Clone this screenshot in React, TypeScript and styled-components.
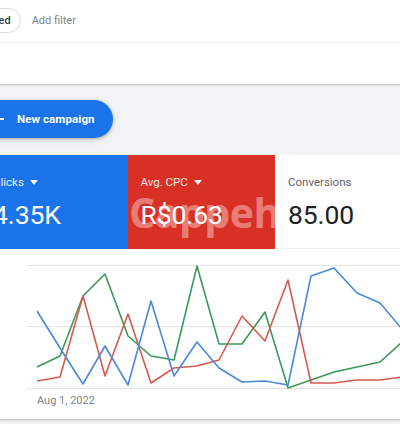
import React from 'react';
import styled, { createGlobalStyle } from 'styled-components';

const GlobalStyle = createGlobalStyle`
  html, body {
    margin: 0;
    padding: 0;
    background: #f1f3f4;
    font-family: Roboto, "Liberation Sans", Arial, sans-serif;
  }
`

const Page = styled.div`
  width: 400px;
  height: 424px;
  overflow: hidden;
  background: #f1f3f4;
  position: relative;
`

const FilterBar = styled.div`
  height: 43px;
  background: #fff;
  border-bottom: 1px solid #ececec;
  display: flex;
  align-items: center;
  gap: 11px;
  box-sizing: border-box;
  padding-bottom: 1px;
`

const Chip = styled.span`
  height: 25px;
  margin-left: -79px;
  padding: 0 9px 0 12px;
  border: 1px solid #dadce0;
  border-radius: 13px;
  display: flex;
  align-items: center;
  font-size: 11px;
  font-weight: 500;
  color: #3c4043;
  white-space: nowrap;
  box-sizing: border-box;
`

const AddFilter = styled.span`
  font-size: 11px;
  color: #80868b;
`

const Blank = styled.div`
  height: 41px;
  background: #fff;
  border-bottom: 1px solid #c6c6c6;
  box-shadow: 0 1px 2px rgba(0, 0, 0, 0.08);
`

const Toolbar = styled.div`
  height: 70px;
  padding-top: 15px;
  box-sizing: border-box;
`

const NewButton = styled.button`
  margin-left: -20px;
  height: 38px;
  padding: 0 18px 0 10px;
  border: none;
  border-radius: 19px;
  background: #1a73e8;
  color: #fff;
  display: flex;
  align-items: center;
  gap: 11px;
  font-family: Roboto, "Liberation Sans", Arial, sans-serif;
  font-size: 11.5px;
  font-weight: 700;
  letter-spacing: 0.1px;
  box-shadow: 0 1px 3px rgba(60, 64, 67, 0.3), 0 2px 6px rgba(60, 64, 67, 0.15);
  > svg {
    width: 16px;
    height: 16px;
  }
`

const StatsCard = styled.section`
  background: #fff;
  border-bottom: 1px solid #c8c8c8;
  box-shadow: 0 1px 2px rgba(0, 0, 0, 0.1);
  position: relative;
`

const Tiles = styled.div`
  display: flex;
  margin-left: -20px;
  height: 94px;
`

const Tile = styled.div<{ $bg: string; $dark?: boolean }>`
  width: 147.5px;
  flex-shrink: 0;
  box-sizing: border-box;
  padding: 20px 12px 0 13px;
  background: ${p => p.$bg};
  color: ${p => (p.$dark ? '#202124' : '#fff')};
  border-bottom: ${p => (p.$dark ? '1px solid #ececec' : 'none')};
`

const TileLabel = styled.div<{ $dark?: boolean }>`
  display: flex;
  align-items: center;
  gap: 6px;
  font-size: 11.5px;
  line-height: 14px;
  color: ${p => (p.$dark ? '#5f6368' : 'rgba(255,255,255,0.92)')};
  > svg {
    width: 8px;
    height: 5px;
    fill: currentColor;
  }
`

const TileValue = styled.div`
  margin-top: 10px;
  font-size: 26.5px;
  line-height: 32px;
  letter-spacing: -0.1px;
`

const Watermark = styled.div`
  position: absolute;
  left: 129px;
  top: 29px;
  font-family: "Open Sans", "DejaVu Sans", sans-serif;
  font-weight: 700;
  font-size: 41px;
  line-height: 56px;
  color: rgba(255, 255, 255, 0.4);
  letter-spacing: -0.5px;
  pointer-events: none;
`

const Chart = styled.div`
  height: 170px;
  padding-bottom: 11px;
  box-sizing: border-box;
  > svg {
    display: block;
  }
`

const AxisLabel = styled.div`
  padding-left: 37px;
  font-size: 11px;
  line-height: 14px;
  color: #80868b;
`

const xs = [37, 60, 83, 105, 128, 151, 174, 197, 219, 242, 265, 288, 311, 334, 357, 380, 402]

const series = [
  { color: '#3b9957', ys: [368, 357, 297, 275, 337, 357, 361, 267, 345, 345, 313, 389, 381, 373, 368, 363, 343] },
  { color: '#d45a50', ys: [382, 378, 297, 377, 315, 384, 369, 367, 361, 317, 342, 281, 384, 384, 381, 381, 378] },
  { color: '#4a89d6', ys: [312, 349, 385, 347, 386, 302, 377, 343, 369, 383, 382, 386, 277, 269, 294, 304, 330] },
]

const toPoints = (ys: number[]) => ys.map((y, i) => `${xs[i]},${y - 250}`).join(' ')

function DropArrow() {
  return (
    <svg viewBox="0 0 8 5">
      <path d="M0 0h8L4 5z" />
    </svg>
  )
}

function App() {
  return (
    <Page>
      <GlobalStyle />
      <FilterBar>
        <Chip>Status: Enabled</Chip>
        <AddFilter>Add filter</AddFilter>
      </FilterBar>
      <Blank />
      <Toolbar>
        <NewButton>
          <svg viewBox="0 0 16 16" fill="none" stroke="#fff" strokeWidth="2">
            <path d="M8 2v12M2 8h12" />
          </svg>
          New campaign
        </NewButton>
      </Toolbar>
      <StatsCard>
        <Tiles>
          <Tile $bg="#1a73e8">
            <TileLabel>Clicks <DropArrow /></TileLabel>
            <TileValue>4.35K</TileValue>
          </Tile>
          <Tile $bg="#d93025">
            <TileLabel>Avg. CPC <DropArrow /></TileLabel>
            <TileValue>R$0.63</TileValue>
          </Tile>
          <Tile $bg="#fff" $dark>
            <TileLabel $dark>Conversions</TileLabel>
            <TileValue>85.00</TileValue>
          </Tile>
        </Tiles>
        <Watermark>Cappeh</Watermark>
        <Chart>
          <svg width="400" height="145" viewBox="0 0 400 145">
            {[16, 77, 139].map(y => (
              <line key={y} x1="27" x2="400" y1={y + 0.5} y2={y + 0.5} stroke="#e3e3e3" strokeWidth="1" />
            ))}
            {series.map(s => (
              <polyline
                key={s.color}
                points={toPoints(s.ys)}
                fill="none"
                stroke={s.color}
                strokeWidth="1.6"
                strokeLinejoin="round"
              />
            ))}
          </svg>
          <AxisLabel>Aug 1, 2022</AxisLabel>
        </Chart>
      </StatsCard>
    </Page>
  )
}

export default App
